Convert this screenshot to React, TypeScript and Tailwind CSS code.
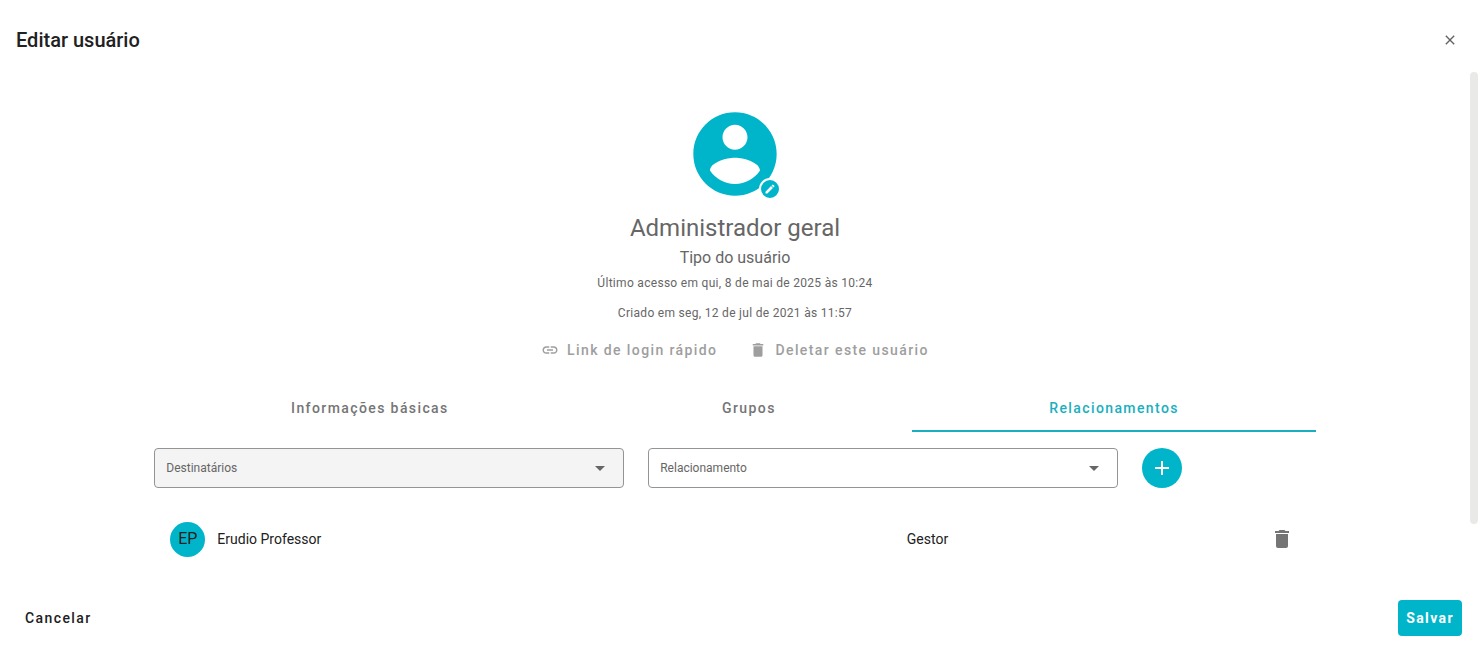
import { useState } from "react";
import type { ReactNode } from "react";
import { MdAdd, MdClose, MdDelete, MdEdit, MdLink } from "react-icons/md";

const tabs = ["Informações básicas", "Grupos", "Relacionamentos"];

const relationships = [
  { initials: "EP", name: "Erudio Professor", role: "Gestor" },
];

function Avatar() {
  return (
    <div className="relative size-[100px]">
      <svg viewBox="0 0 24 24" className="size-full text-[#00b5ca]" fill="currentColor" aria-hidden="true">
        <path d="M12 2C6.48 2 2 6.48 2 12s4.48 10 10 10 10-4.48 10-10S17.52 2 12 2zm0 3c1.66 0 3 1.34 3 3s-1.34 3-3 3-3-1.34-3-3 1.34-3 3-3zm0 14.2c-2.5 0-4.71-1.28-6-3.22.03-1.99 4-3.08 6-3.08 1.99 0 5.97 1.09 6 3.08-1.29 1.94-3.5 3.22-6 3.22z" />
      </svg>
      <button
        type="button"
        aria-label="Alterar foto"
        className="absolute right-1 bottom-1 flex size-[22px] items-center justify-center rounded-full border-2 border-white bg-[#00b5ca] text-white"
      >
        <MdEdit className="size-3" />
      </button>
    </div>
  );
}

function SelectField({ id, label, filled }: { id: string; label: string; filled?: boolean }) {
  return (
    <div className="relative col-span-5">
      <select
        id={id}
        aria-label={label}
        className={
          "block h-10 w-full appearance-none rounded border border-[#949494] px-[11px] text-xs text-[#666666] " +
          (filled ? "bg-[#f4f4f4]" : "bg-white")
        }
      >
        <option>{label}</option>
      </select>
      <svg
        viewBox="0 0 10 5"
        className="pointer-events-none absolute top-[18px] right-[19px] h-[5px] w-[10px] text-[#666666]"
        fill="currentColor"
        aria-hidden="true"
      >
        <path d="M0 0h10L5 5z" />
      </svg>
    </div>
  );
}

function QuickAction({ icon, children }: { icon: ReactNode; children: ReactNode }) {
  return (
    <button type="button" className="flex h-9 items-center gap-2 text-sm font-medium tracking-widest text-[#9e9e9e]">
      {icon}
      {children}
    </button>
  );
}

export default function App() {
  const [active, setActive] = useState(2);

  return (
    <div className="flex min-h-screen flex-col bg-white pr-[5px] font-['Roboto',sans-serif] text-[#212121]">
      <header className="flex h-[72px] items-center justify-between px-4 pt-2">
        <h1 className="text-xl font-medium">Editar usuário</h1>
        <button type="button" aria-label="Fechar" className="flex size-6 items-center justify-center text-[#616161]">
          <MdClose className="size-4" />
        </button>
      </header>

      <div className="flex flex-1">
        <main className="flex-1 pt-8">
          <section className="flex flex-col items-center text-[#666666]">
            <Avatar />
            <h2 className="mt-2 text-2xl leading-8">Administrador geral</h2>
            <p className="mt-0.5 text-base leading-6">Tipo do usuário</p>
            <p className="mt-[3px] text-xs leading-5 tracking-wide">Último acesso em qui, 8 de mai de 2025 às 10:24</p>
            <p className="mt-2.5 text-xs leading-5 tracking-wide">Criado em seg, 12 de jul de 2021 às 11:57</p>
            <div className="mt-[9px] flex gap-8">
              <QuickAction icon={<MdLink className="size-[18px]" />}>Link de login rápido</QuickAction>
              <QuickAction icon={<MdDelete className="size-[18px]" />}>Deletar este usuário</QuickAction>
            </div>
          </section>

          <div className="mx-auto w-[79%]">
            <div role="tablist" className="mt-4 flex">
              {tabs.map((tab, index) => (
                <button
                  key={tab}
                  type="button"
                  role="tab"
                  aria-selected={index === active}
                  onClick={() => setActive(index)}
                  className={
                    "h-12 flex-auto border-y-2 border-t-transparent text-sm font-medium tracking-widest " +
                    (index === active ? "border-b-[#1aafc0] text-[#1aafc0]" : "border-b-transparent text-[#757575]")
                  }
                >
                  {tab}
                </button>
              ))}
            </div>

            <form className="mt-4 grid grid-cols-12 gap-6">
              <SelectField id="recipients" label="Destinatários" filled />
              <SelectField id="relationship" label="Relacionamento" />
              <button
                type="button"
                aria-label="Adicionar"
                className="flex size-10 items-center justify-center rounded-full bg-[#00b5ca] text-white"
              >
                <MdAdd className="size-6" />
              </button>
            </form>

            <ul className="mt-4 px-4">
              {relationships.map((item) => (
                <li key={item.name} className="grid h-[70px] grid-cols-[15fr_8fr] items-center text-sm">
                  <div className="flex items-center gap-3">
                    <span className="flex size-[35px] items-center justify-center rounded-full bg-[#00b5ca] text-base">
                      {item.initials}
                    </span>
                    {item.name}
                  </div>
                  <div className="flex items-center justify-between pr-1.5">
                    {item.role}
                    <button type="button" aria-label="Remover" className="text-[#757575]">
                      <MdDelete className="size-6" />
                    </button>
                  </div>
                </li>
              ))}
            </ul>
          </div>
        </main>
        <div className="w-2" aria-hidden="true">
          <div className="h-[87%] rounded-full bg-[#e9e9e7]" />
        </div>
      </div>

      <footer className="flex items-center justify-between px-4 pt-2 pb-[9px] text-sm">
        <button type="button" className="h-9 rounded px-[9px] font-medium tracking-widest">
          Cancelar
        </button>
        <button type="button" className="h-9 rounded bg-[#00b5ca] px-2 font-bold tracking-widest text-white">
          Salvar
        </button>
      </footer>
    </div>
  );
}
